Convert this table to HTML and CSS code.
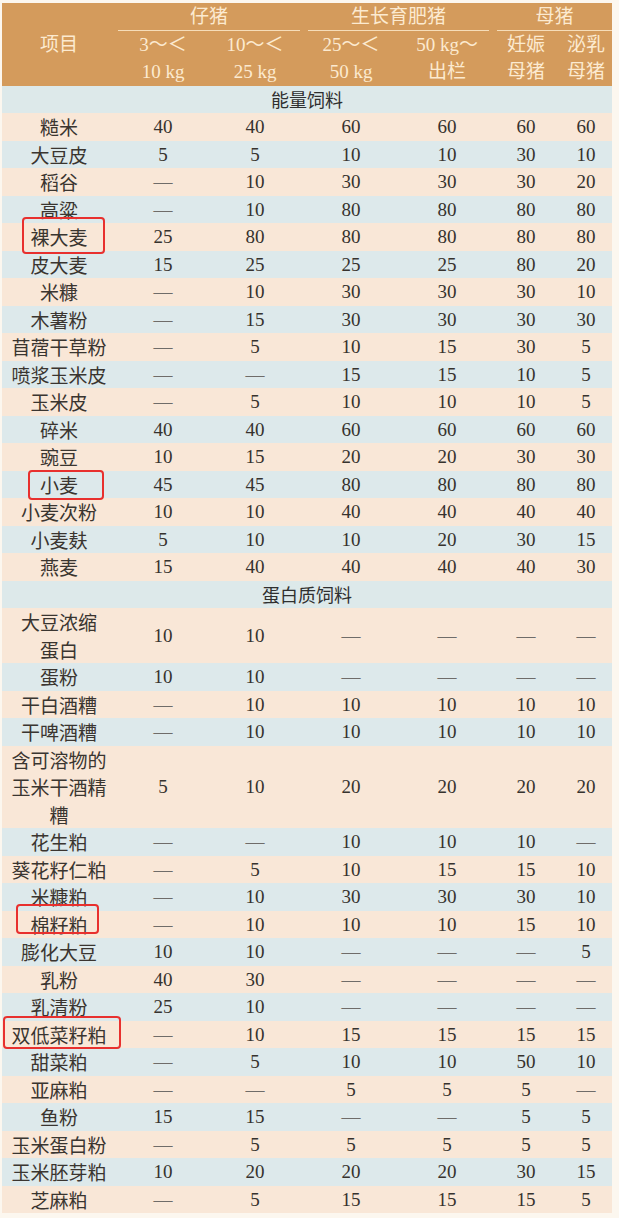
FILE: index.html
```html
<!DOCTYPE html>
<html lang="zh-CN">
<head>
<meta charset="utf-8">
<title>饲料原料推荐用量</title>
<link rel="stylesheet" href="styles.css">
</head>
<body>
<table class="feed">
  <colgroup>
    <col class="c-item"><col class="c1"><col class="c2"><col class="c3"><col class="c4"><col class="c5"><col class="c6">
  </colgroup>
  <thead>
    <tr>
      <th rowspan="3" class="item-head">项目</th>
      <th colspan="2" class="group"><div class="gline g1">仔猪</div></th>
      <th colspan="2" class="group"><div class="gline g2">生长育肥猪</div></th>
      <th colspan="2" class="group"><div class="gline g3">母猪</div></th>
    </tr>
    <tr><th>3～＜</th><th>10～＜</th><th>25～＜</th><th>50 kg～</th><th>妊娠</th><th>泌乳</th></tr>
    <tr><th>10 kg</th><th>25 kg</th><th>50 kg</th><th>出栏</th><th>母猪</th><th>母猪</th></tr>
  </thead>
  <tbody>
    <tr class="section"><td colspan="7">能量饲料</td></tr>
    <tr class="p"><td class="it">糙米</td><td>40</td><td>40</td><td>60</td><td>60</td><td>60</td><td>60</td></tr>
    <tr class="b"><td class="it">大豆皮</td><td>5</td><td>5</td><td>10</td><td>10</td><td>30</td><td>10</td></tr>
    <tr class="p"><td class="it">稻谷</td><td class="d">—</td><td>10</td><td>30</td><td>30</td><td>30</td><td>20</td></tr>
    <tr class="b"><td class="it">高粱</td><td class="d">—</td><td>10</td><td>80</td><td>80</td><td>80</td><td>80</td></tr>
    <tr class="p"><td class="it"><span class="mark m1"></span>裸大麦</td><td>25</td><td>80</td><td>80</td><td>80</td><td>80</td><td>80</td></tr>
    <tr class="b"><td class="it">皮大麦</td><td>15</td><td>25</td><td>25</td><td>25</td><td>80</td><td>20</td></tr>
    <tr class="p"><td class="it">米糠</td><td class="d">—</td><td>10</td><td>30</td><td>30</td><td>30</td><td>10</td></tr>
    <tr class="b"><td class="it">木薯粉</td><td class="d">—</td><td>15</td><td>30</td><td>30</td><td>30</td><td>30</td></tr>
    <tr class="p"><td class="it">苜蓿干草粉</td><td class="d">—</td><td>5</td><td>10</td><td>15</td><td>30</td><td>5</td></tr>
    <tr class="b"><td class="it">喷浆玉米皮</td><td class="d">—</td><td class="d">—</td><td>15</td><td>15</td><td>10</td><td>5</td></tr>
    <tr class="p"><td class="it">玉米皮</td><td class="d">—</td><td>5</td><td>10</td><td>10</td><td>10</td><td>5</td></tr>
    <tr class="b"><td class="it">碎米</td><td>40</td><td>40</td><td>60</td><td>60</td><td>60</td><td>60</td></tr>
    <tr class="p"><td class="it">豌豆</td><td>10</td><td>15</td><td>20</td><td>20</td><td>30</td><td>30</td></tr>
    <tr class="b"><td class="it"><span class="mark m2"></span>小麦</td><td>45</td><td>45</td><td>80</td><td>80</td><td>80</td><td>80</td></tr>
    <tr class="p"><td class="it">小麦次粉</td><td>10</td><td>10</td><td>40</td><td>40</td><td>40</td><td>40</td></tr>
    <tr class="b"><td class="it">小麦麸</td><td>5</td><td>10</td><td>10</td><td>20</td><td>30</td><td>15</td></tr>
    <tr class="p"><td class="it">燕麦</td><td>15</td><td>40</td><td>40</td><td>40</td><td>40</td><td>30</td></tr>
    <tr class="section"><td colspan="7">蛋白质饲料</td></tr>
    <tr class="p"><td class="it">大豆浓缩<br>蛋白</td><td>10</td><td>10</td><td class="d">—</td><td class="d">—</td><td class="d">—</td><td class="d">—</td></tr>
    <tr class="b"><td class="it">蛋粉</td><td>10</td><td>10</td><td class="d">—</td><td class="d">—</td><td class="d">—</td><td class="d">—</td></tr>
    <tr class="p"><td class="it">干白酒糟</td><td class="d">—</td><td>10</td><td>10</td><td>10</td><td>10</td><td>10</td></tr>
    <tr class="b"><td class="it">干啤酒糟</td><td class="d">—</td><td>10</td><td>10</td><td>10</td><td>10</td><td>10</td></tr>
    <tr class="p"><td class="it">含可溶物的<br>玉米干酒精<br>糟</td><td>5</td><td>10</td><td>20</td><td>20</td><td>20</td><td>20</td></tr>
    <tr class="b"><td class="it">花生粕</td><td class="d">—</td><td class="d">—</td><td>10</td><td>10</td><td>10</td><td class="d">—</td></tr>
    <tr class="p"><td class="it">葵花籽仁粕</td><td class="d">—</td><td>5</td><td>10</td><td>15</td><td>15</td><td>10</td></tr>
    <tr class="b"><td class="it">米糠粕</td><td class="d">—</td><td>10</td><td>30</td><td>30</td><td>30</td><td>10</td></tr>
    <tr class="p"><td class="it"><span class="mark m3"></span>棉籽粕</td><td class="d">—</td><td>10</td><td>10</td><td>10</td><td>15</td><td>10</td></tr>
    <tr class="b"><td class="it">膨化大豆</td><td>10</td><td>10</td><td class="d">—</td><td class="d">—</td><td class="d">—</td><td>5</td></tr>
    <tr class="p"><td class="it">乳粉</td><td>40</td><td>30</td><td class="d">—</td><td class="d">—</td><td class="d">—</td><td class="d">—</td></tr>
    <tr class="b"><td class="it">乳清粉</td><td>25</td><td>10</td><td class="d">—</td><td class="d">—</td><td class="d">—</td><td class="d">—</td></tr>
    <tr class="p"><td class="it"><span class="mark m4"></span>双低菜籽粕</td><td class="d">—</td><td>10</td><td>15</td><td>15</td><td>15</td><td>15</td></tr>
    <tr class="b"><td class="it">甜菜粕</td><td class="d">—</td><td>5</td><td>10</td><td>10</td><td>50</td><td>10</td></tr>
    <tr class="p"><td class="it">亚麻粕</td><td class="d">—</td><td class="d">—</td><td>5</td><td>5</td><td>5</td><td class="d">—</td></tr>
    <tr class="b"><td class="it">鱼粉</td><td>15</td><td>15</td><td class="d">—</td><td class="d">—</td><td>5</td><td>5</td></tr>
    <tr class="p"><td class="it">玉米蛋白粉</td><td class="d">—</td><td>5</td><td>5</td><td>5</td><td>5</td><td>5</td></tr>
    <tr class="b"><td class="it">玉米胚芽粕</td><td>10</td><td>20</td><td>20</td><td>20</td><td>30</td><td>15</td></tr>
    <tr class="p"><td class="it">芝麻粕</td><td class="d">—</td><td>5</td><td>15</td><td>15</td><td>15</td><td>5</td></tr>
  </tbody>
</table>
</body>
</html>
```
FILE: styles.css
```css
html, body {
  margin: 0;
  padding: 0;
  background: #fcf7ef;
}

body {
  padding: 3px 0 0 2px;
}

.feed {
  border-collapse: collapse;
  border-spacing: 0;
  table-layout: fixed;
  width: 610px;
  font-family: "Liberation Serif", "Noto Sans CJK SC", serif;
  font-size: 19px;
  color: #36322e;
}

.c-item { width: 114px; }
.c1 { width: 94px; }
.c2 { width: 90px; }
.c3 { width: 102px; }
.c4 { width: 90px; }
.c5 { width: 68px; }
.c6 { width: 52px; }

.feed th,
.feed td {
  padding: 0;
  height: 27.5px;
  line-height: 27.5px;
  text-align: center;
  white-space: nowrap;
  vertical-align: middle;
}

.feed thead th {
  background: #d49b5c;
  color: #fcead0;
  font-weight: normal;
}

.feed th.group {
  vertical-align: bottom;
}

.gline {
  height: 26px;
  line-height: 26px;
  border-bottom: 1.5px solid #f6ddb9;
}

.g1 { margin: 0 0 0 2px; }
.g2 { margin: 0 3px 0 8px; }
.g3 { margin: 0 0 0 5px; }

.section td {
  background: #dde9ea;
  color: #2f2f2f;
  font-family: "Noto Sans CJK SC", sans-serif;
  font-size: 18px;
}

.p td { background: #f9e7d7; }
.b td { background: #dde9eb; }

.feed td.it {
  position: relative;
  font-family: "Noto Sans CJK SC", sans-serif;
  font-weight: 400;
  color: #3a3530;
}

.feed td.d {
  color: #6f6c69;
}

.mark {
  position: absolute;
  z-index: 2;
  border: 2px solid #e8302e;
  border-radius: 4px;
  box-sizing: border-box;
  pointer-events: none;
}

.m1 { left: 20px; right: 11px; top: -6px; bottom: -3px; }
.m2 { left: 26px; right: 12px; top: -1px; bottom: -2px; }
.m3 { left: 14px; right: 17px; top: -7px; bottom: 4px; }
.m4 { left: 1px; right: -5px; top: -5px; bottom: -1px; }
```
